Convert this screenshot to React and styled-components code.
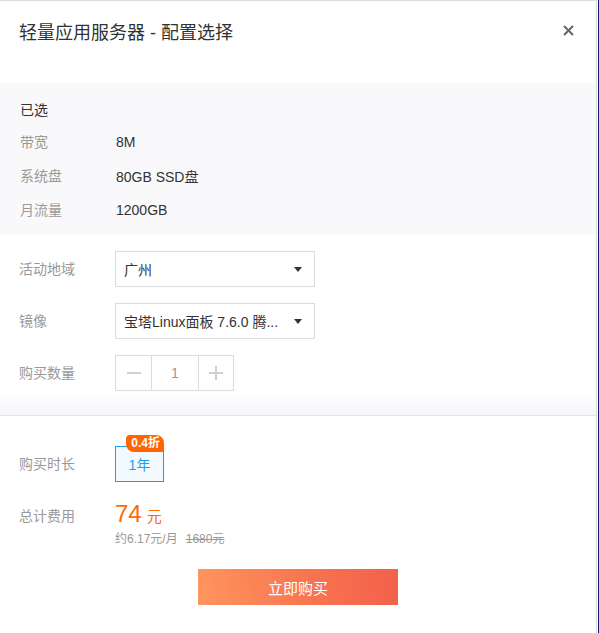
import React from "react";
import styled, { createGlobalStyle } from "styled-components";

const GlobalStyle = createGlobalStyle`
  html, body {
    margin: 0;
    padding: 0;
    background: #fff;
  }
  body {
    font-family: "Liberation Sans", "Noto Sans CJK SC", sans-serif;
    color: #333;
    -webkit-font-smoothing: antialiased;
  }
`;

const Page = styled.div`
  width: 598px;
  min-height: 633px;
  border-right: 1px solid #1c1c6e;
`;

const Modal = styled.div`
  width: 596px;
  min-height: 632px;
  border-top: 1px solid #dcdcdc;
  border-right: 1px solid #dcdcdc;
  background: #fff;
`;

const Header = styled.div`
  display: flex;
  justify-content: space-between;
  align-items: flex-start;
  height: 82px;
  padding: 0 21px 0 19px;
`;

const Title = styled.h2`
  margin: 19px 0 0;
  font-size: 18px;
  font-weight: normal;
  line-height: 26px;
  color: #333;
`;

const Close = styled.span`
  margin-top: 21px;
  width: 14px;
  height: 16px;
  display: flex;
  align-items: center;
  justify-content: center;
  cursor: pointer;
`;

const Selected = styled.div`
  background: #f9f9fb;
  padding: 17px 20px 7px;
`;

const SelectedTitle = styled.div`
  font-size: 14px;
  line-height: 20px;
  color: #333;
  margin-bottom: 5px;
`;

const InfoRow = styled.div`
  display: flex;
  height: 34px;
  align-items: center;
  font-size: 14px;
`;

const Label = styled.div`
  width: 96px;
  flex-shrink: 0;
  color: #999;
  font-size: 14px;
  line-height: ${(p) => p.$lh || "20px"};
`;

const Value = styled.div`
  color: #333;
`;

const Form = styled.div`
  display: flex;
  flex-direction: column;
  gap: 16px;
  padding: 17px 20px 24px 19px;
  border-bottom: 1px solid #e3e4e8;
  background: linear-gradient(to bottom, #fff calc(100% - 22px), #f4f5f8 100%);
`;

const FormRow = styled.div`
  display: flex;
  align-items: center;
  min-height: 36px;
`;

const Select = styled.div`
  box-sizing: border-box;
  width: 200px;
  height: 36px;
  border: 1px solid #dcdcdc;
  display: flex;
  align-items: center;
  justify-content: space-between;
  padding: 0 12px 0 8px;
  font-size: 14px;
  color: #333;
  background: #fff;
  cursor: pointer;
`;

const SelectText = styled.span`
  white-space: nowrap;
`;

const Caret = styled.span`
  width: 0;
  height: 0;
  border-left: 4px solid transparent;
  border-right: 4px solid transparent;
  border-top: 5px solid #333;
`;

const Stepper = styled.div`
  display: flex;
  height: 36px;
  box-sizing: border-box;
  border: 1px solid #dcdcdc;
`;

const StepButton = styled.span`
  width: ${(p) => p.$w}px;
  display: flex;
  align-items: center;
  justify-content: center;
  border-left: ${(p) => (p.$divided ? "1px solid #dcdcdc" : "none")};
  border-right: ${(p) => (p.$dividedRight ? "1px solid #dcdcdc" : "none")};
`;

const StepValue = styled.span`
  width: 46px;
  display: flex;
  align-items: center;
  justify-content: center;
  font-size: 14px;
  color: #999;
`;

const Bottom = styled.div`
  padding: 30px 20px 0 19px;
`;

const DurationRow = styled.div`
  display: flex;
  align-items: center;
`;

const Option = styled.div`
  position: relative;
  box-sizing: border-box;
  width: 49px;
  height: 36px;
  border: 1px solid #1a9ef0;
  background: #f3faff;
  color: #1a9ef0;
  font-size: 14px;
  display: flex;
  align-items: center;
  justify-content: center;
  cursor: pointer;
`;

const Badge = styled.span`
  position: absolute;
  top: -12px;
  right: -1px;
  height: 17px;
  padding: 0 4px 0 5px;
  background: #ff6600;
  color: #fff;
  font-size: 12px;
  font-weight: bold;
  line-height: 17px;
  border-radius: 4px 8px 0 8px;
  white-space: nowrap;
`;

const TotalRow = styled.div`
  display: flex;
  align-items: flex-start;
  margin-top: 18px;
`;

const PriceBlock = styled.div`
  display: flex;
  flex-direction: column;
`;

const PriceLine = styled.div`
  display: flex;
  align-items: baseline;
  height: 28px;
  color: #ff6a00;
`;

const PriceNum = styled.span`
  font-size: 24px;
  line-height: 28px;
  margin-right: 5px;
`;

const PriceUnit = styled.span`
  font-size: 15px;
`;

const SubLine = styled.div`
  font-size: 12px;
  line-height: 20px;
  color: #999;
  margin-top: 1px;
`;

const Old = styled.span`
  margin-left: 8px;
  text-decoration: line-through;
`;

const Actions = styled.div`
  display: flex;
  justify-content: center;
  margin-top: 20px;
  padding-left: 1px;
`;

const BuyButton = styled.button`
  width: 200px;
  height: 36px;
  border: none;
  background: linear-gradient(80deg, #ff955e 0%, #f7724f 60%, #f2604b 100%);
  color: #fff;
  font-family: inherit;
  font-size: 15px;
  cursor: pointer;
`;

const App = () => {
  const info = [
    ["带宽", "8M"],
    ["系统盘", "80GB SSD盘"],
    ["月流量", "1200GB"],
  ];

  return (
    <Page>
      <GlobalStyle />
      <Modal>
        <Header>
          <Title>轻量应用服务器 - 配置选择</Title>
          <Close>
            <svg width="11" height="11" viewBox="0 0 11 11">
              <path d="M1 1L10 10M10 1L1 10" stroke="#666" strokeWidth="2" />
            </svg>
          </Close>
        </Header>

        <Selected>
          <SelectedTitle>已选</SelectedTitle>
          {info.map(([k, v]) => (
            <InfoRow key={k}>
              <Label>{k}</Label>
              <Value>{v}</Value>
            </InfoRow>
          ))}
        </Selected>

        <Form>
          <FormRow>
            <Label>活动地域</Label>
            <Select>
              <SelectText>广州</SelectText>
              <Caret />
            </Select>
          </FormRow>
          <FormRow>
            <Label>镜像</Label>
            <Select>
              <SelectText>宝塔Linux面板 7.6.0 腾...</SelectText>
              <Caret />
            </Select>
          </FormRow>
          <FormRow>
            <Label>购买数量</Label>
            <Stepper>
              <StepButton $w={35} $dividedRight>
                <svg width="14" height="2" viewBox="0 0 14 2">
                  <rect width="14" height="2" fill="#d0d0d0" />
                </svg>
              </StepButton>
              <StepValue>1</StepValue>
              <StepButton $w={34} $divided>
                <svg width="14" height="14" viewBox="0 0 14 14">
                  <rect y="6" width="14" height="2" fill="#d0d0d0" />
                  <rect x="6" width="2" height="14" fill="#d0d0d0" />
                </svg>
              </StepButton>
            </Stepper>
          </FormRow>
        </Form>

        <Bottom>
          <DurationRow>
            <Label>购买时长</Label>
            <Option>
              1年
              <Badge>0.4折</Badge>
            </Option>
          </DurationRow>

          <TotalRow>
            <Label $lh="32px">总计费用</Label>
            <PriceBlock>
              <PriceLine>
                <PriceNum>74</PriceNum>
                <PriceUnit>元</PriceUnit>
              </PriceLine>
              <SubLine>
                约6.17元/月
                <Old>1680元</Old>
              </SubLine>
            </PriceBlock>
          </TotalRow>

          <Actions>
            <BuyButton>立即购买</BuyButton>
          </Actions>
        </Bottom>
      </Modal>
    </Page>
  );
};

export default App;
